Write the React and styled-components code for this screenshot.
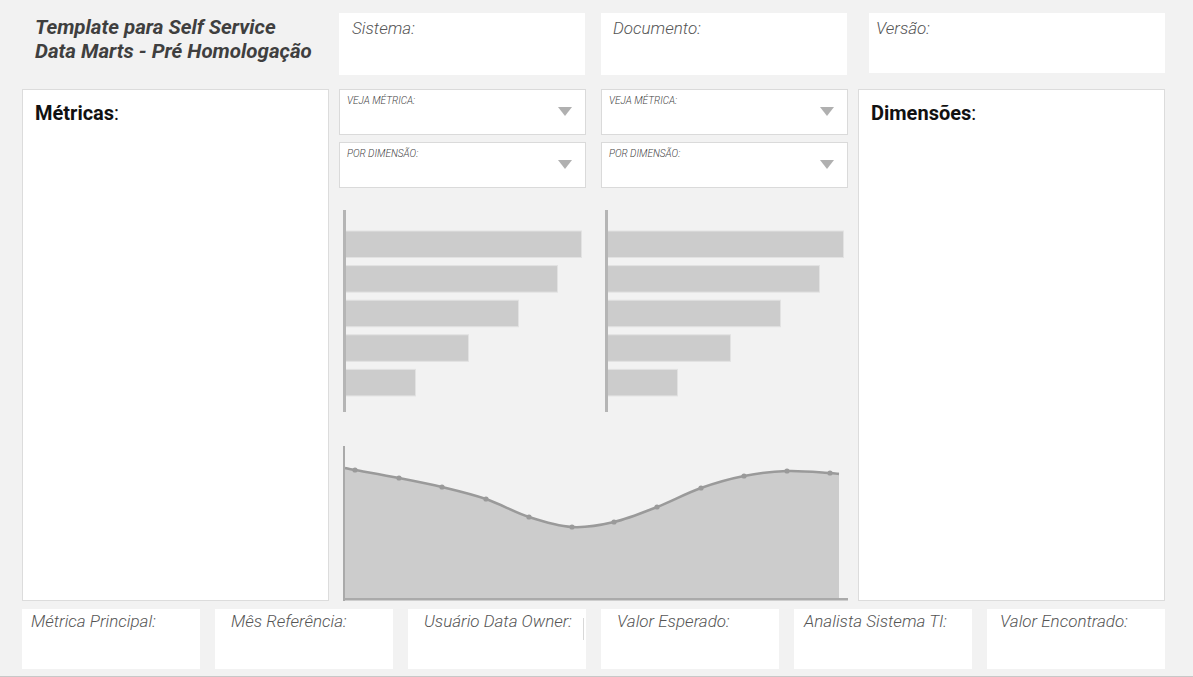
import React from "react";
import styled, { createGlobalStyle } from "styled-components";

// --- dados de exemplo ---
const TOP_FIELDS = [
  { label: "Sistema:", width: 246, gap: 0, height: 62, pad: 13 },
  { label: "Documento:", width: 246, gap: 16, height: 62, pad: 12 },
  { label: "Versão:", width: 296, gap: 22, height: 60, pad: 7 },
];

const BOTTOM_FIELDS = [
  { label: "Métrica Principal:", pad: 9 },
  { label: "Mês Referência:", pad: 16 },
  { label: "Usuário Data Owner:", pad: 16, cursor: true },
  { label: "Valor Esperado:", pad: 16 },
  { label: "Analista Sistema TI:", pad: 10 },
  { label: "Valor Encontrado:", pad: 13 },
];

const BARS = [237, 213, 174, 124, 71];

const AREA_POINTS = [
  [6, 22],
  [16, 24],
  [60, 32],
  [103, 41],
  [147, 53],
  [190, 71],
  [233, 81],
  [275, 76],
  [318, 61],
  [362, 42],
  [405, 30],
  [448, 25],
  [491, 27],
  [500, 28],
];

const smoothPath = (pts) => {
  let d = `M${pts[0][0]},${pts[0][1]}`;
  for (let i = 0; i < pts.length - 1; i++) {
    const p0 = pts[i - 1] || pts[i];
    const p1 = pts[i];
    const p2 = pts[i + 1];
    const p3 = pts[i + 2] || p2;
    const c1x = p1[0] + (p2[0] - p0[0]) / 6;
    const c1y = p1[1] + (p2[1] - p0[1]) / 6;
    const c2x = p2[0] - (p3[0] - p1[0]) / 6;
    const c2y = p2[1] - (p3[1] - p1[1]) / 6;
    d += ` C${c1x},${c1y} ${c2x},${c2y} ${p2[0]},${p2[1]}`;
  }
  return d;
};

const GlobalStyle = createGlobalStyle`
  html, body {
    margin: 0;
    padding: 0;
    background: #f2f2f2;
  }
  body {
    font-family: Roboto, "Liberation Sans", sans-serif;
  }
`;

const App = () => {
  const line = smoothPath(AREA_POINTS);
  const area = `${line} L500,153 L6,153 Z`;

  return (
    <Page>
      <GlobalStyle />
      <TopRow>
        <Title>
          Template para Self Service
          <br />
          Data Marts - Pré Homologação
        </Title>
        {TOP_FIELDS.map((f) => (
          <FieldBox
            key={f.label}
            $width={f.width}
            $gap={f.gap}
            $height={f.height}
            $pad={f.pad}
          >
            {f.label}
          </FieldBox>
        ))}
      </TopRow>

      <MainRow>
        <SidePanel>
          <PanelTitle>
            <strong>Métricas</strong>:
          </PanelTitle>
        </SidePanel>

        <Middle>
          <ChartColumns>
            {[0, 1].map((i) => (
              <ChartColumn key={i}>
                <Dropdown label="VEJA MÉTRICA:" />
                <Dropdown label="POR DIMENSÃO:" />
                <BarChart />
              </ChartColumn>
            ))}
          </ChartColumns>
          <AreaSvg width="509" height="155" viewBox="0 0 509 155">
            <path d={area} fill="#cccccc" />
            <path d={line} fill="none" stroke="#9a9a9a" strokeWidth="2.5" />
            {AREA_POINTS.slice(1, -1).map(([x, y]) => (
              <circle key={x} cx={x} cy={y} r="2.6" fill="#9a9a9a" />
            ))}
            <rect x="4" y="0" width="2" height="155" fill="#aaaaaa" />
            <rect x="4" y="152" width="505" height="2.5" fill="#aaaaaa" />
          </AreaSvg>
        </Middle>

        <SidePanel>
          <PanelTitle>
            <strong>Dimensões</strong>:
          </PanelTitle>
        </SidePanel>
      </MainRow>

      <BottomRow>
        {BOTTOM_FIELDS.map((f) => (
          <BottomBox key={f.label} $pad={f.pad}>
            {f.label}
            {f.cursor && <Cursor />}
          </BottomBox>
        ))}
      </BottomRow>
    </Page>
  );
};

const Dropdown = ({ label }) => (
  <DropBox>
    <DropLabel>{label}</DropLabel>
    <Caret />
  </DropBox>
);

const BarChart = () => (
  <BarSvg width="247" height="202" viewBox="0 0 247 202">
    {BARS.map((w, i) => (
      <rect
        key={i}
        x="5.5"
        y={21 + i * 34.6}
        width={w}
        height="26.5"
        fill="#cccccc"
        stroke="#e2e2e2"
        strokeWidth="1"
      />
    ))}
    <rect x="4" y="0" width="3" height="202" fill="#b5b5b5" />
  </BarSvg>
);

export default App;

// --- styled components ---

const Page = styled.div`
  width: 1193px;
  height: 677px;
  box-sizing: border-box;
  padding: 13px 28px 0 22px;
  border-bottom: 1px solid #c8c8c8;
  display: flex;
  flex-direction: column;
  overflow: hidden;
`;

const TopRow = styled.div`
  display: flex;
  align-items: flex-start;
  height: 62px;
`;

const Title = styled.div`
  width: 317px;
  box-sizing: border-box;
  padding: 2px 0 0 13px;
  font-size: 20.5px;
  line-height: 24px;
  font-weight: 700;
  font-style: italic;
  color: #3f3f3f;
  white-space: nowrap;
`;

const FieldBox = styled.div`
  width: ${(p) => p.$width}px;
  height: ${(p) => p.$height}px;
  margin-left: ${(p) => p.$gap}px;
  box-sizing: border-box;
  background: #ffffff;
  padding: 5px 0 0 ${(p) => p.$pad}px;
  font-size: 17px;
  font-weight: 300;
  font-style: italic;
  color: #555555;
`;

const MainRow = styled.div`
  display: grid;
  grid-template-columns: 307px 509px 307px;
  column-gap: 10px;
  margin-top: 14px;
  height: 512px;
`;

const SidePanel = styled.div`
  background: #ffffff;
  border: 1px solid #dcdcdc;
  box-sizing: border-box;
  padding: 11px 12px;
`;

const PanelTitle = styled.div`
  font-size: 20px;
  color: #111111;

  strong {
    font-weight: 700;
  }
`;

const Middle = styled.div`
  display: flex;
  flex-direction: column;
`;

const ChartColumns = styled.div`
  display: grid;
  grid-template-columns: 247px 247px;
  column-gap: 15px;
`;

const ChartColumn = styled.div`
  display: flex;
  flex-direction: column;
  gap: 7px;
`;

const DropBox = styled.div`
  position: relative;
  height: 46px;
  box-sizing: border-box;
  background: #ffffff;
  border: 1px solid #dadada;
  padding: 5px 0 0 7px;
`;

const DropLabel = styled.div`
  font-size: 10px;
  font-style: italic;
  font-weight: 300;
  color: #444444;
  text-transform: uppercase;
`;

const Caret = styled.span`
  position: absolute;
  right: 13px;
  top: 17px;
  width: 0;
  height: 0;
  border-left: 7px solid transparent;
  border-right: 7px solid transparent;
  border-top: 9px solid #b0b0b0;
`;

const BarSvg = styled.svg`
  display: block;
  margin-top: 15px;
`;

const AreaSvg = styled.svg`
  display: block;
  margin-top: 34px;
`;

const BottomRow = styled.div`
  display: grid;
  grid-template-columns: repeat(6, 178px);
  column-gap: 15px;
  margin-top: 8px;
`;

const BottomBox = styled.div`
  position: relative;
  height: 60px;
  box-sizing: border-box;
  background: #ffffff;
  padding: 2px 0 0 ${(p) => p.$pad}px;
  font-size: 17px;
  font-weight: 300;
  font-style: italic;
  color: #555555;
`;

const Cursor = styled.span`
  position: absolute;
  right: 2px;
  top: 9px;
  width: 1px;
  height: 22px;
  background: #d8d8d8;
`;
